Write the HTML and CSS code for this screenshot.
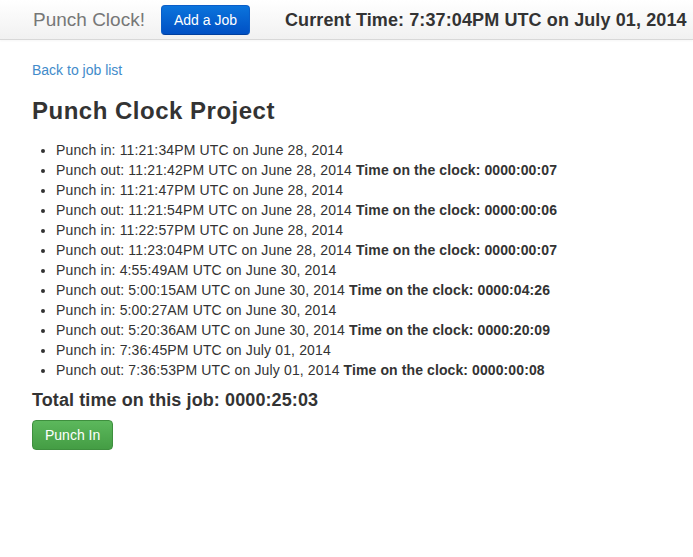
FILE: index.html
```html
<!DOCTYPE html>
<html>
<head>
<meta charset="utf-8">
<link rel="stylesheet" href="styles.css">
</head>
<body>
<div class="navbar">
  <span class="brand">Punch Clock!</span>
  <a class="btn btn-primary" href="#">Add a Job</a>
  <span class="clock">Current Time: 7:37:04PM UTC on July 01, 2014</span>
</div>
<div class="container">
  <a class="back" href="#">Back to job list</a>
  <h1 class="title">Punch Clock Project</h1>
  <ul class="punches">
    <li><span class="pt">Punch in: 11:21:34PM UTC on June 28, 2014</span></li>
    <li><span class="pt">Punch out: 11:21:42PM UTC on June 28, 2014 </span><b>Time on the clock: 0000:00:07</b></li>
    <li><span class="pt">Punch in: 11:21:47PM UTC on June 28, 2014</span></li>
    <li><span class="pt">Punch out: 11:21:54PM UTC on June 28, 2014 </span><b>Time on the clock: 0000:00:06</b></li>
    <li><span class="pt">Punch in: 11:22:57PM UTC on June 28, 2014</span></li>
    <li><span class="pt">Punch out: 11:23:04PM UTC on June 28, 2014 </span><b>Time on the clock: 0000:00:07</b></li>
    <li><span class="pt">Punch in: 4:55:49AM UTC on June 30, 2014</span></li>
    <li><span class="pt">Punch out: 5:00:15AM UTC on June 30, 2014 </span><b>Time on the clock: 0000:04:26</b></li>
    <li><span class="pt">Punch in: 5:00:27AM UTC on June 30, 2014</span></li>
    <li><span class="pt">Punch out: 5:20:36AM UTC on June 30, 2014 </span><b>Time on the clock: 0000:20:09</b></li>
    <li><span class="pt">Punch in: 7:36:45PM UTC on July 01, 2014</span></li>
    <li><span class="pt">Punch out: 7:36:53PM UTC on July 01, 2014 </span><b>Time on the clock: 0000:00:08</b></li>
  </ul>
  <h4 class="total">Total time on this job: 0000:25:03</h4>
  <a class="btn btn-success" href="#">Punch In</a>
</div>
</body>
</html>
```
FILE: styles.css
```css
html, body {
  margin: 0;
  padding: 0;
  background: #fff;
}
body {
  font-family: "Liberation Sans", Arial, sans-serif;
  font-size: 14px;
  line-height: 20px;
  color: #333;
}
.navbar {
  display: flex;
  align-items: center;
  height: 39px;
  border-bottom: 1px solid #d8d8d8;
  background: linear-gradient(#ffffff, #f1f1f1);
  box-shadow: 0 1px 2px rgba(0,0,0,0.04);
}
.brand {
  padding-left: 33px;
  font-size: 19px;
  color: #777;
  margin-right: 16px;
}
.btn {
  display: inline-block;
  font-size: 14px;
  line-height: 20px;
  padding: 4px 12px;
  border-radius: 4px;
  text-decoration: none;
  color: #fff;
  border: 1px solid transparent;
}
.btn-primary {
  background: linear-gradient(#0b74dc, #0050c4);
  border-color: #0a5ec8 #0a5ec8 #003f9e;
}
.clock {
  margin-left: 35px;
  font-size: 18px;
  font-weight: bold;
  letter-spacing: 0.11px;
  color: #333;
}
.container {
  padding: 20px 32px 0;
}
.back {
  display: block;
  color: #428bca;
  text-decoration: none;
}
.title {
  margin: 16px 0 0;
  font-size: 24px;
  line-height: 30px;
  letter-spacing: 0.5px;
  font-weight: bold;
}
.punches {
  margin: 14px 0 0;
  padding-left: 24px;
}
.pt {
  letter-spacing: 0.14px;
}
.punches b {
  letter-spacing: 0.1px;
}
.total {
  margin: 10px 0 0;
  font-size: 18px;
  line-height: 20px;
  letter-spacing: 0.1px;
}
.btn-success {
  margin-top: 10px;
  background: linear-gradient(#5cb85c, #449d44);
  border-color: #3e8f3e;
}
```
